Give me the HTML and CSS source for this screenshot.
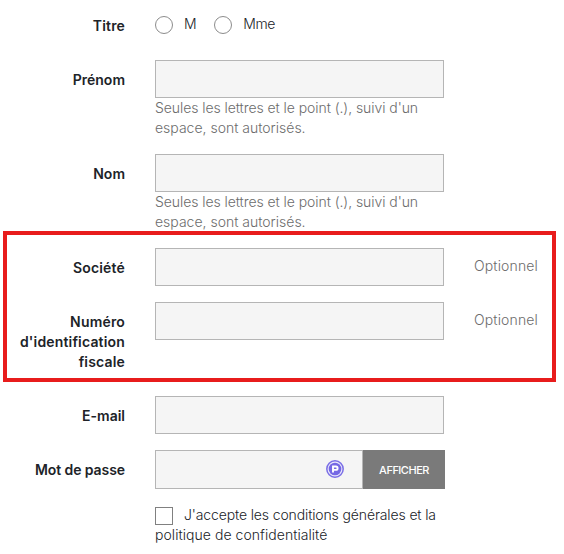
FILE: index.html
```html
<!DOCTYPE html>
<html lang="fr">
<head>
    <meta charset="UTF-8">
    <meta name="viewport" content="width=device-width, initial-scale=1.0">
    <title>Créer un compte</title>
    <link rel="stylesheet" href="styles.css">
</head>
<body>
    <form class="account-form">
        <div class="form-row title-row">
            <span class="form-label">Titre</span>
            <div class="radio-group">
                <label class="radio-option"><input type="radio" name="title" value="1">M</label>
                <label class="radio-option"><input type="radio" name="title" value="2">Mme</label>
            </div>
        </div>
        <div class="form-row">
            <label class="form-label" for="firstname">Prénom</label>
            <div>
                <input class="form-control" type="text" id="firstname">
                <p class="hint"><span class="hint-first">Seules les lettres et le point (.), suivi d'un</span><br>espace, sont autorisés.</p>
            </div>
        </div>
        <div class="form-row">
            <label class="form-label" for="lastname">Nom</label>
            <div>
                <input class="form-control" type="text" id="lastname">
                <p class="hint"><span class="hint-first">Seules les lettres et le point (.), suivi d'un</span><br>espace, sont autorisés.</p>
            </div>
        </div>
        <div class="highlight">
            <div class="form-row">
                <label class="form-label label-wide" for="company">Société</label>
                <input class="form-control" type="text" id="company">
                <span class="optional">Optionnel</span>
            </div>
            <div class="form-row">
                <label class="form-label label-wide" for="siret">Numéro<br>d'identification<br>fiscale</label>
                <input class="form-control" type="text" id="siret">
                <span class="optional">Optionnel</span>
            </div>
        </div>
        <div class="form-row">
            <label class="form-label" for="email">E-mail</label>
            <input class="form-control" type="email" id="email">
        </div>
        <div class="form-row">
            <label class="form-label label-password" for="password">Mot de passe</label>
            <div class="input-group">
                <div class="password-field">
                    <input type="password" id="password">
                    <svg class="password-icon" width="18" height="18" viewBox="0 0 18 18">
                        <circle cx="9" cy="9" r="8.2" fill="#e9e7fb" stroke="#7b6fe6" stroke-width="1.5"/>
                        <circle cx="9" cy="9" r="6.3" fill="#7568e4"/>
                        <path d="M7 12.6V6.5h2.9a1.7 1.7 0 0 1 0 3.4H7" fill="none" stroke="#fff" stroke-width="1.9"/>
                    </svg>
                </div>
                <button type="button" class="show-button">AFFICHER</button>
            </div>
        </div>
        <div class="form-row">
            <span></span>
            <label class="terms"><input type="checkbox"><span class="terms-first">J'accepte les conditions générales et la</span><br><span class="terms-second">politique de confidentialité</span></label>
        </div>
    </form>
</body>
</html>
```

FILE: styles.css
```css
* {
    box-sizing: border-box;
}
body {
    margin: 0;
    background: white;
    color: #202328;
    font-family: Inter, Roboto, sans-serif;
    font-size: 14px;
    font-weight: 300;
    line-height: 20px;
}
.account-form {
    padding-top: 14px;
}
.form-row {
    display: grid;
    grid-template-columns: 125px 289px auto;
    column-gap: 30px;
    align-items: start;
    margin-bottom: 16px;
    white-space: nowrap;
}
.title-row {
    height: 30px;
}
.form-label {
    padding-top: 10px;
    text-align: right;
    font-weight: 600;
}
.label-wide {
    letter-spacing: 0.17px;
}
.label-password {
    letter-spacing: -0.08px;
}
.title-row .form-label {
    padding-top: 2px;
    letter-spacing: 0.15px;
}
.radio-group {
    display: flex;
    gap: 18px;
}
.radio-option {
    display: flex;
    gap: 11px;
    letter-spacing: -0.4px;
}
.radio-option input {
    appearance: none;
    width: 18px;
    height: 18px;
    margin: 2px 0 0;
    border: 1px solid #8c8c8c;
    border-radius: 50%;
}
.form-control {
    display: block;
    width: 289px;
    height: 38px;
    padding: 8px 16px;
    border: 1px solid #b5b5b5;
    background: #f5f5f5;
}
.hint {
    margin: 0;
    color: #6c6c6c;
}
.hint-first {
    letter-spacing: -0.065px;
}
.optional {
    padding-top: 8px;
    color: #6c6c6c;
    letter-spacing: 0.15px;
}
.highlight {
    width: 553px;
    margin: -17px 0 14px 3px;
    padding-top: 13px;
    padding-bottom: 6px;
    border: 4px solid #e81c1c;
}
.highlight .form-row {
    grid-template-columns: 118px 289px auto;
}
.highlight .form-row:last-child {
    margin-bottom: 0;
}
.input-group {
    display: flex;
    width: 290px;
    height: 39px;
}
.password-field {
    display: flex;
    align-items: center;
    width: 208px;
    padding: 0 18px 2px 0;
    border: 1px solid #b5b5b5;
    background: #f5f5f5;
}
.password-field input {
    flex: 1;
    min-width: 0;
    border: 0;
    background: none;
}
.show-button {
    flex: 1;
    padding: 1px 0 0;
    border: 0;
    background: #7a7a7a;
    color: white;
    font-family: inherit;
    font-size: 11px;
    font-weight: 500;
    letter-spacing: -0.5px;
}
.terms input {
    appearance: none;
    width: 18px;
    height: 18px;
    margin: 2px 11px 0 0;
    border: 1px solid #808080;
    vertical-align: top;
}
.terms-first {
    letter-spacing: -0.13px;
}
.terms-second {
    letter-spacing: 0.05px;
}
```
